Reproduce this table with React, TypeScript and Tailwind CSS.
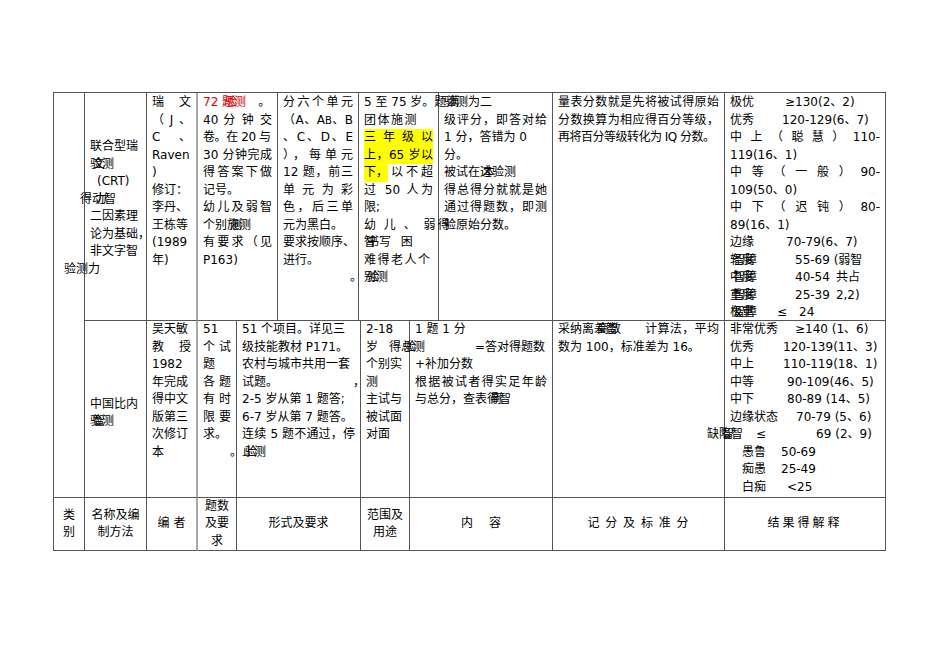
import React from 'react'

function Ov({ a, b }: { a: string; b: string }) {
  return (
    <span className="relative inline-block">
      {a}
      <span className="absolute left-[3px] top-0">{b}</span>
    </span>
  )
}

function Grade({ label, w, children }: { label: React.ReactNode; w: string; children: React.ReactNode }) {
  return (
    <div className="whitespace-nowrap">
      <span className={`inline-block ${w}`}>{label}</span>
      {children}
    </div>
  )
}

const cell = 'border-r border-b border-[#555] px-[5px]'

export default function App() {
  return (
    <div className="min-h-[672px] bg-white pl-[53px] pt-[92px] font-['DejaVu_Sans','Noto_Sans_CJK_SC',sans-serif] text-[12px] leading-[17.5px] text-black">
      <div className="w-[833px] border-l border-t border-[#555]">
        <div className="flex">
          {/* 类别 column, merged over both rows */}
          <div className="w-[31px] border-b border-r border-[#555]" />

          <div className="flex-1">
            {/* Row 1: 联合型瑞文测验 */}
            <div className="flex h-[228px]">
              <div className={`${cell} flex w-[62px] flex-col justify-center whitespace-nowrap pt-[3px]`}>
                <div>联合型瑞</div>
                <div><Ov a="验" b="文" />测</div>
                <div className="ml-[7px]">(CRT)</div>
                <div className="-ml-[10px]">得<Ov a="动" b="力" />智</div>
                <div>二因素理</div>
                <div>论为基础，</div>
                <div>非文字智</div>
                <div className="-ml-[26px]">验测力</div>
              </div>
              <div className="w-[51px] border-b border-r-2 border-[#555] border-r-[#a8a8a8] px-[5px] pt-[1px]">
                <div className="[text-align-last:justify]">瑞 文</div>
                <div className="[text-align-last:justify]">（J、</div>
                <div className="[text-align-last:justify]">C 、</div>
                <div>Raven</div>
                <div>)</div>
                <div>修订：</div>
                <div>李丹、</div>
                <div>王栋等</div>
                <div>(1989</div>
                <div>年)</div>
              </div>
              <div className={`${cell} w-[80px] pt-[1px]`}>
                <div className="whitespace-nowrap">
                  <span className="text-[#e00000]">72 <Ov a="题" b="验" />测</span>
                  <span className="ml-[12px]">。</span>
                </div>
                <div className="[text-align-last:justify]">40 分 钟 交</div>
                <div className="whitespace-nowrap tracking-[-0.4px]">卷。在 20 与</div>
                <div className="[text-align-last:justify]">30 分钟完成</div>
                <div className="[text-align-last:justify]">得答案下做</div>
                <div>记号。</div>
                <div className="[text-align-last:justify]">幼儿及弱智</div>
                <div>个别<Ov a="施" b="测" />测</div>
                <div className="[text-align-last:justify]">有要求（见</div>
                <div>P163)</div>
              </div>
              <div className={`${cell} w-[81px] pt-[1px]`}>
                <div className="[text-align-last:justify]">分六个单元</div>
                <div className="[text-align-last:justify]">（A、A<span className="text-[10px]">B</span>、B</div>
                <div className="[text-align-last:justify]">、C、D、E</div>
                <div className="[text-align-last:justify]">），每单元</div>
                <div className="[text-align-last:justify]">12 题，前三</div>
                <div className="[text-align-last:justify]">单 元 为 彩</div>
                <div className="[text-align-last:justify]">色，后三单</div>
                <div>元为黑白。</div>
                <div className="whitespace-nowrap">要求按顺序、</div>
                <div>进行。</div>
                <div className="-mr-[9px] text-right">。</div>
              </div>
              <div className={`${cell} w-[80px] pt-[1px]`}>
                <div className="whitespace-nowrap">5 至 75 岁。题</div>
                <div className="tracking-[1.5px]">团体施测</div>
                <div className="bg-[#ffff00] [text-align-last:justify]">三 年 级 以</div>
                <div className="bg-[#ffff00] [text-align-last:justify]">上，65 岁以</div>
                <div className="flex">
                  <span className="bg-[#ffff00]">下，</span>
                  <span className="flex-1 pl-[3px] [text-align-last:justify]">以不超</span>
                </div>
                <div className="[text-align-last:justify]">过 50 人为</div>
                <div>限;</div>
                <div className="whitespace-nowrap tracking-[2px]">幼 儿 、 弱得</div>
                <div className="whitespace-nowrap tracking-[3px]"><Ov a="智" b="书" />写 困</div>
                <div className="whitespace-nowrap tracking-[1.5px]">难得老人个</div>
                <div><Ov a="别" b="验" />测</div>
              </div>
              <div className={`${cell} w-[114px] pt-[1px]`}>
                <div className="whitespace-nowrap"><Ov a="验" b="满" />测为二</div>
                <div className="[text-align-last:justify]">级评分，即答对给</div>
                <div>1 分，答错为 0</div>
                <div>分。</div>
                <div>被试在<Ov a="这" b="本" />验测</div>
                <div className="[text-align-last:justify]">得总得分就就是她</div>
                <div className="[text-align-last:justify]">通过得题数，即测</div>
                <div>验原始分数。</div>
              </div>
              <div className={`${cell} w-[172px] pt-[1px]`}>
                <div className="[text-align-last:justify]">量表分数就是先将被试得原始</div>
                <div className="[text-align-last:justify]">分数换算为相应得百分等级，</div>
                <div className="whitespace-nowrap tracking-[-0.5px]">再将百分等级转化为 IQ 分数。</div>
              </div>
              <div className={`${cell} w-[161px] pt-[1px]`}>
                <Grade label="极优" w="w-[55px]">≥130(2、2)</Grade>
                <Grade label="优秀" w="w-[52px]">120-129(6、7)</Grade>
                <div className="[text-align-last:justify]">中 上 （ 聪 慧 ） 110-</div>
                <div>119(16、1)</div>
                <div className="[text-align-last:justify]">中 等 （ 一 般 ） 90-</div>
                <div>109(50、0)</div>
                <div className="[text-align-last:justify]">中 下 （ 迟 钝 ） 80-</div>
                <div>89(16、1)</div>
                <Grade label="边缘" w="w-[56px]">70-79(6、7)</Grade>
                <Grade label={<Ov a="轻度" b="智障" />} w="w-[65px]">55-69 (弱智</Grade>
                <Grade label={<Ov a="中度" b="智障" />} w="w-[65px]">40-54<span className="ml-[6px]">共占</span></Grade>
                <Grade label={<Ov a="重度" b="智障" />} w="w-[65px]">25-39<span className="ml-[6px]">2,2)</span></Grade>
                <Grade label={<Ov a="极重" b="智障" />} w="w-[47px]">≤<span className="ml-[12px]">24</span></Grade>
              </div>
            </div>

            {/* Row 2: 中国比内测验 */}
            <div className="flex h-[177px]">
              <div className={`${cell} flex w-[62px] flex-col justify-center whitespace-nowrap pt-[8px]`}>
                <div>中国比内</div>
                <div><Ov a="验" b="智" />测</div>
              </div>
              <div className="w-[51px] border-b border-r-2 border-[#555] border-r-[#a8a8a8] px-[5px]">
                <div>吴天敏</div>
                <div className="[text-align-last:justify]">教 授</div>
                <div>1982</div>
                <div>年完成</div>
                <div>得中文</div>
                <div>版第三</div>
                <div>次修订</div>
                <div>本</div>
              </div>
              <div className={`${cell} w-[39px]`}>
                <div>51</div>
                <div className="[text-align-last:justify]">个 试</div>
                <div>题</div>
                <div className="[text-align-last:justify]">各 题</div>
                <div className="[text-align-last:justify]">有 时</div>
                <div className="[text-align-last:justify]">限 要</div>
                <div>求。</div>
                <div className="-mr-[11px] text-right">。</div>
              </div>
              <div className={`${cell} w-[124px]`}>
                <div className="whitespace-nowrap">51 个项目。详见三</div>
                <div className="whitespace-nowrap">级技能教材 P171。</div>
                <div className="whitespace-nowrap">农村与城市共用一套</div>
                <div className="-mr-[10px] flex justify-between">
                  <span>试题。</span>
                  <span>，</span>
                </div>
                <div className="whitespace-nowrap">2-5 岁从第 1 题答;</div>
                <div className="whitespace-nowrap">6-7 岁从第 7 题答。</div>
                <div className="[text-align-last:justify]">连续 5 题不通过，停</div>
                <div><Ov a="止" b="验" />测</div>
              </div>
              <div className={`${cell} w-[49px]`}>
                <div>2-18</div>
                <div className="whitespace-nowrap">岁<span className="ml-[11px]">得</span><Ov a="总" b="验" />测</div>
                <div>个别实</div>
                <div>测</div>
                <div>主试与</div>
                <div>被试面</div>
                <div>对面</div>
              </div>
              <div className={`${cell} w-[143px]`}>
                <div>1 题 1 分</div>
                <div className="pl-[60px]">=答对得题数</div>
                <div>+补加分数</div>
                <div className="[text-align-last:justify]">根据被试者得实足年龄</div>
                <div>与总分，查表<Ov a="得" b="商" />智</div>
              </div>
              <div className={`${cell} w-[172px]`}>
                <div className="flex whitespace-nowrap">
                  <span>采纳离<Ov a="差智" b="商数" /></span>
                  <span className="ml-[27px] flex-1 [text-align-last:justify]">计算法，平均</span>
                </div>
                <div>数为 100，标准差为 16。</div>
              </div>
              <div className={`${cell} w-[161px]`}>
                <Grade label="非常优秀" w="w-[65px]">≥140 (1、6)</Grade>
                <Grade label="优秀" w="w-[53px]">120-139(11、3)</Grade>
                <Grade label="中上" w="w-[53px]">110-119(18、1)</Grade>
                <Grade label="中等" w="w-[57px]">90-109(46、5)</Grade>
                <Grade label="中下" w="w-[57px]">80-89 (14、5)</Grade>
                <Grade label="边缘状态" w="w-[66px]">70-79 (5、6)</Grade>
                <div className="-ml-[23px] whitespace-nowrap">
                  缺<Ov a="陷" b="智" />智<span className="ml-[13px]">≤</span>
                  <span className="ml-[50px]">69 (2、9)</span>
                </div>
                <Grade label="愚鲁" w="w-[39px] ml-[12px]">50-69</Grade>
                <Grade label="痴愚" w="w-[39px] ml-[12px]">25-49</Grade>
                <Grade label="白痴" w="w-[45px] ml-[12px]">&lt;25</Grade>
              </div>
            </div>
          </div>
        </div>

        {/* Header row (at the bottom of the page) */}
        <div className="flex h-[53px] text-center">
          <div className={`${cell} flex w-[31px] items-center justify-center px-0`}>类<br />别</div>
          <div className={`${cell} flex w-[62px] items-center justify-center px-0`}>名称及编<br />制方法</div>
          <div className="flex w-[51px] items-center justify-center border-b border-r-2 border-[#555] border-r-[#a8a8a8]">编 者</div>
          <div className={`${cell} flex w-[39px] items-center justify-center px-0`}>题数<br />及要<br />求</div>
          <div className={`${cell} flex w-[124px] items-center justify-center`}>形式及要求</div>
          <div className={`${cell} flex w-[49px] items-center justify-center px-0`}>范围及<br />用途</div>
          <div className={`${cell} flex w-[143px] items-center justify-center`}>内<span className="ml-[16px]">容</span></div>
          <div className={`${cell} flex w-[172px] items-center justify-center tracking-[1px]`}>记 分 及 标 准 分</div>
          <div className={`${cell} flex w-[161px] items-center justify-center tracking-[3px]`}>结果得解释</div>
        </div>
      </div>
    </div>
  )
}
